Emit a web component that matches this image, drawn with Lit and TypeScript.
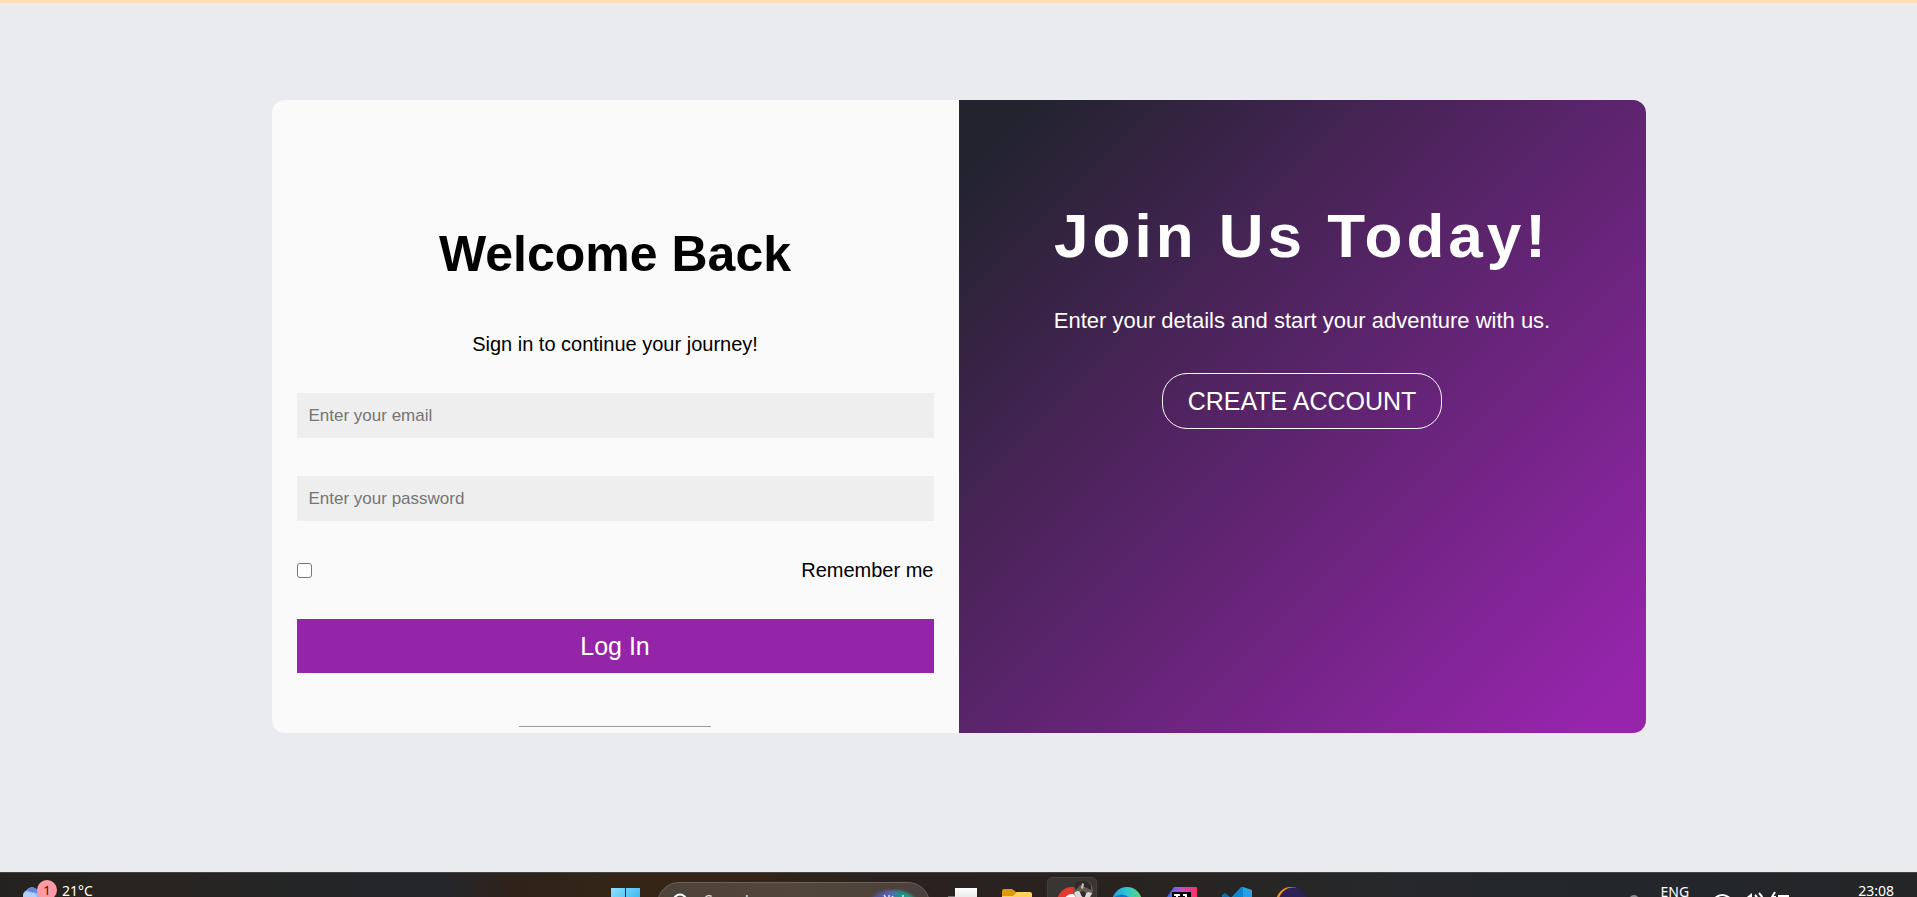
import { LitElement, html, css, svg } from "lit";
import { customElement } from "lit/decorators.js";

@customElement("login-card")
export class LoginCard extends LitElement {
  static styles = css`
    :host { display: block; width: 100%; max-width: 1374px; }
    * { box-sizing: border-box; }
    .card { display: grid; grid-template-columns: 1fr 1fr; border-radius: 13px; overflow: hidden; }
    .signin { background: #fafafa; padding: 100px 25px 6px; color: #000; display: flex; flex-direction: column; }
    h1, h2, p { margin: 0; text-align: center; }
    .welcome { font-size: 50px; line-height: 58px; margin-top: 25px; }
    .lead { font-size: 20px; line-height: 24px; margin-top: 49px; }
    form { display: flex; flex-direction: column; gap: 38px; margin-top: 37px; }
    .field { width: 100%; height: 45px; padding: 0 12px; border: 0; border-radius: 0; background: #eee; font: 17px/20px "Liberation Sans", Arial, sans-serif; }
    .field::placeholder { color: #757575; opacity: 1; }
    .remember { display: flex; align-items: center; justify-content: space-between; font-size: 20px; line-height: 22px; }
    .tick { appearance: none; width: 15px; height: 15px; margin: 0; border: 1px solid #767676; border-radius: 3px; background: #fff; }
    .tick:checked { background: #9425a8; }
    .submit { height: 54px; border: 0; background: #9425a8; color: #fff; font: 25px/29px "Liberation Sans", Arial, sans-serif; cursor: pointer; }
    .rule { width: 30%; height: 1px; border: 0; background: #9a9a9a; margin: 53px auto 0; }
    .join { background: linear-gradient(135deg, #22232e 5%, #9625ac 95%); padding: 100px 25px; color: #fff; display: flex; flex-direction: column; align-items: center; }
    .title { font-size: 62px; line-height: 72px; letter-spacing: 4px; }
    .sub { font-size: 22px; line-height: 28px; margin-top: 35px; }
    .create { margin-top: 38px; height: 56px; padding: 0 25px; border: 1px solid #fff; border-radius: 25px; background: transparent; color: #fff; font: 25px/29px "Liberation Sans", Arial, sans-serif; cursor: pointer; }
  `;

  render() {
    return html`
      <section class="card">
        <div class="signin">
          <h1 class="welcome">Welcome Back</h1>
          <p class="lead">Sign in to continue your journey!</p>
          <form @submit=${(e: Event) => e.preventDefault()}>
            <input class="field" type="email" aria-label="Enter your email" placeholder="Enter your email" />
            <input class="field" type="password" aria-label="Enter your password" placeholder="Enter your password" />
            <div class="remember">
              <input class="tick" id="remember" type="checkbox" />
              <label for="remember">Remember me</label>
            </div>
            <button class="submit" type="submit">Log In</button>
          </form>
          <hr class="rule" />
        </div>
        <div class="join">
          <h2 class="title">Join Us Today!</h2>
          <p class="sub">Enter your details and start your adventure with us.</p>
          <button class="create" type="button">CREATE ACCOUNT</button>
        </div>
      </section>
    `;
  }
}

const icon = (label: string, body: unknown) => html`
  <button class="tile" type="button" aria-label=${label}>
    <svg class="glyph" viewBox="0 0 50 50" width="50" height="50">${body}</svg>
  </button>`;

@customElement("task-bar")
export class TaskBar extends LitElement {
  static styles = css`
    :host { display: block; height: 25px; overflow: hidden; color: #fff; font-family: "Noto Sans", sans-serif;
      background: linear-gradient(90deg, #242220 0, #29241f 6%, #242526 15%, #24262b 23%, #30221a 27%, #332517 31%, #332416 40%, #2b2220 46%, #28231f 58%, #26282a 72%, #23272b 84%, #252527 100%);
      border-top: 1px solid #454344; box-sizing: border-box; }
    * { box-sizing: border-box; }
    .bar { display: grid; grid-template-columns: 1fr auto 1fr; align-items: start; }
    .weather { display: flex; align-items: flex-start; padding-left: 22px; gap: 5px; font-size: 14px; line-height: 16px; }
    .weather svg, .tray svg { display: block; }
    .temp { padding-top: 10px; }
    .apps { display: flex; gap: 5px; padding-top: 4px; }
    .tile { border: 0; background: transparent; padding: 0; width: 50px; height: 50px; }
    .tile.active { background: #393532; border: 1px solid #45413e; border-radius: 5px; }
    .active .glyph { margin: -1px; }
    .glyph { display: block; }
    .search { display: flex; justify-content: space-between; align-items: flex-start; width: 273px; height: 44px; margin: 5px 2px 0; padding: 9px 3px 0 14px; border-radius: 22px; border: 1px solid #6c6258;
      background: linear-gradient(90deg, #4d4339, #51463a 55%, #4b403b); overflow: hidden; }
    .box { flex: 1; min-width: 0; height: 18px; border: 0; background: transparent; padding: 0 14px; color: #fff; font: 16px/18px "Noto Sans", sans-serif; }
    .box::placeholder { color: #e5e0dc; opacity: 1; }
    .art { margin-top: -3px; }
    .tray { display: flex; justify-content: flex-end; align-items: flex-start; padding-right: 23px; font-size: 14px; line-height: 16px; }
    .lang { padding: 11px 17px 0 0; }
    .time { padding: 10px 0 0 64px; }
  `;

  render() {
    return html`
      <footer class="bar">
        <div class="weather">
          <svg width="35" height="24" viewBox="0 0 35 24">
            <path d="M1 24v-3a6 6 0 0 1 4-4 6 6 0 0 1 10 0c5 0 7 3 7 7z" fill="#8fb4f3" />
            <path d="M5 17a6 6 0 0 1 10 0l1 3-7-1z" fill="#6485d3" />
            <path d="M2 20c3-2 7 0 8 0s4 0 5 4H1z" fill="#b1cffb" />
            <circle cx="25" cy="17" r="10" fill="#ff99a4" />
            <text x="25" y="22" text-anchor="middle" font-family="Noto Sans" font-size="13" fill="#2a1416">1</text>
          </svg>
          <span class="temp">21°C</span>
        </div>
        <nav class="apps" aria-label="Apps">
          ${icon("Start", svg`
            <defs><linearGradient id="win" x2="1" y2="1"><stop stop-color="#8fe1ff" /><stop offset="1" stop-color="#14a5ee" /></linearGradient></defs>
            <path fill="url(#win)" d="M11 11h14v14H11zM26 11h14v14H26zM11 26h14v14H11zM26 26h14v14H26z" />`)}
          <label class="search">
            <svg width="18" height="20" viewBox="0 0 18 20" fill="none" stroke="#fff" stroke-width="2">
              <circle cx="8" cy="9" r="6.5" /><path d="m12 14 5 5" />
            </svg>
            <input class="box" type="search" aria-label="Search" placeholder="Search" />
            <svg class="art" width="60" height="34" viewBox="0 0 60 34">
              <defs>
                <linearGradient id="art"><stop stop-color="#4a4b86" /><stop offset=".45" stop-color="#5d62b4" /><stop offset=".6" stop-color="#258e8b" /><stop offset="1" stop-color="#1dac91" /></linearGradient>
                <filter id="soft"><feGaussianBlur stdDeviation="1.5" /></filter>
              </defs>
              <ellipse cx="27" cy="18" rx="25" ry="17" fill="url(#art)" filter="url(#soft)" />
              <path d="m18 6 2 3m3-3v3m4-2-2 3M37 6v5" stroke="#d8e5f0" stroke-width="1.5" fill="none" />
            </svg>
          </label>
          ${icon("Task view", svg`
            <defs><linearGradient id="tv" x2="0" y2="1"><stop stop-color="#fff" /><stop offset="1" stop-color="#cfcfcf" /></linearGradient></defs>
            <path fill="#737373" d="M11 19h18v18H11z" /><path fill="url(#tv)" d="M18 11h22v22H18z" />`)}
          ${icon("File Explorer", svg`
            <path fill="#dc9a0c" d="M10 14a2 2 0 0 1 2-2h8l4 3h14v10H10z" />
            <path fill="#ffd35c" d="M10 19h11l4-4h13a2 2 0 0 1 2 2v21H10z" />`)}
          <button class="tile active" type="button" aria-label="Chrome">
            <svg class="glyph" viewBox="0 0 50 50" width="50" height="50">
              <circle cx="25" cy="25" r="15" fill="#e8392f" /><circle cx="25" cy="25" r="8" fill="#fff" />
              <circle cx="36" cy="13" r="10" fill="#675b52" />
              <path fill="#2f2a27" d="M27 9c2-5 8-7 13-5l4 4v5l-6-3-5-2-4 5z" />
              <path fill="#dad8d6" d="M27 16q4-4 7 0l3 2 4-3 4 1-3 6q-6 3-12 0z" />
              <path fill="#2f2a27" d="m33 15 4-1 2 3-2 5-3-4z" /><path fill="#c7c3c0" d="m35 6 2 1-1 5-2-1z" />
            </svg>
          </button>
          ${icon("Edge", svg`
            <defs><linearGradient id="edge"><stop stop-color="#1c9de0" /><stop offset=".5" stop-color="#33c4d4" /><stop offset="1" stop-color="#5fdc6c" /></linearGradient></defs>
            <circle cx="25" cy="25" r="15" fill="url(#edge)" /><path fill="#1277c8" d="M11 21q10-8 19 2v16q-17 0-20-14z" />`)}
          ${icon("IntelliJ IDEA", svg`
            <defs><linearGradient id="ij"><stop stop-color="#2f6bff" /><stop offset=".2" stop-color="#6b62f0" /><stop offset=".5" stop-color="#c44fc4" /><stop offset="1" stop-color="#fc2f62" /></linearGradient></defs>
            <path fill="url(#ij)" d="M17 10h23v30H10V20z" /><path d="M15 15h19v19H15z" />
            <path d="M17 18h6m-3 0v7m6-7h4m-1 0v6" stroke="#fff" stroke-width="2" fill="none" />`)}
          ${icon("Visual Studio Code", svg`
            <path fill="#0d6fb3" d="m10 18 3-2 20 16v7L10 20z" /><path fill="#0e84cb" d="M29 10h3v10L13 34l-3-3 6-7z" />
            <path fill="#2a9fe5" d="m31 10 9 3v24l-9 3z" />`)}
          ${icon("Eclipse", svg`
            <circle cx="24" cy="25" r="15" fill="#f7941e" /><circle cx="26" cy="25" r="14.5" fill="#2c2255" />`)}
        </nav>
        <div class="tray">
          <svg width="31" height="24" viewBox="0 0 31 24"><circle cx="4" cy="27" r="5" fill="#8a8d90" /></svg>
          <span class="lang">ENG</span>
          <svg width="88" height="24" viewBox="0 0 88 24" fill="none" stroke="#fff" stroke-width="2">
            <path d="M8 26q8-8 17 0M40 26l5-4v6M49 22q3 3 3 6M53 20q4 4 4 8M69 19l-3 5h4M72 23h10v2" />
          </svg>
          <time class="time">23:08</time>
        </div>
      </footer>
    `;
  }
}

@customElement("app-root")
export class AppRoot extends LitElement {
  static styles = css`
    :host { display: flex; flex-direction: column; height: 100vh; overflow: hidden; box-sizing: border-box;
      border-top: 3px solid #ffddb3; background: #e9ebee; font-family: "Liberation Sans", Arial, sans-serif; }
    .page { flex: 1; min-height: 0; display: flex; justify-content: center; align-items: flex-start; padding: 97px 25px 0; }
  `;

  render() {
    return html`<main class="page"><login-card></login-card></main><task-bar></task-bar>`;
  }
}
